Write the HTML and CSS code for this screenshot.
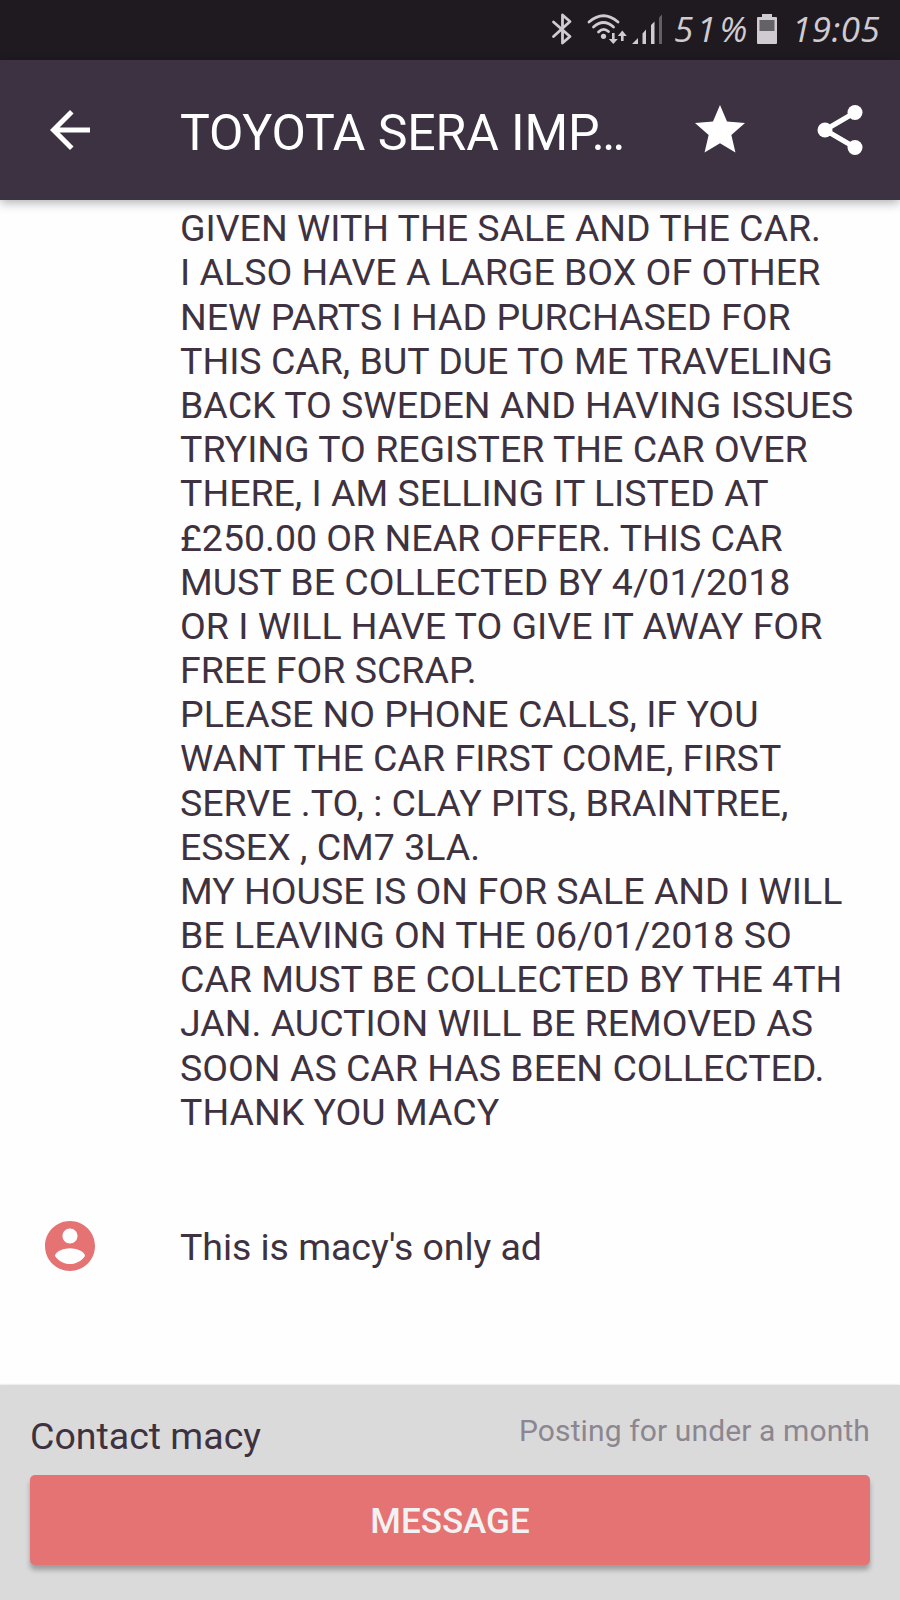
FILE: index.html
```
<!DOCTYPE html>
<html lang="en">
<head>
  <meta charset="UTF-8" />
  <meta name="viewport" content="width=device-width, initial-scale=1.0"/>
  <title>TOYOTA SERA IMPORT</title>
  <link rel="stylesheet" href="styles.css">
</head>
<body>
  <div class="status-bar">
    <!-- bluetooth, wifi and signal -->
    <svg class="status-icons" width="114" height="60" viewBox="0 0 114 60">
      <g fill="none" stroke="#cfcbd0" stroke-width="2.8" stroke-linejoin="round" stroke-linecap="round">
        <path d="M3.500 22 L20 36.500 L12.500 43 V15 L20 21.500 L3.500 36.500"/>
        <path d="M39 22 Q53.500 9.500 68 22"/>
        <path d="M43.500 27 Q53.500 18 63.500 27"/>
        <path d="M48.500 32 Q53.500 27 58.500 31.500"/>
      </g>
      <circle cx="53.500" cy="36.300" r="2.600" fill="#cfcbd0"/>
      <path fill="#cfcbd0" d="M62 33h2.600v6h3.200l-4.500 5-4.500-5H62zM71 41V36h-3.200l4.500-5.500 4.500 5.500h-3.200v5z"/>
      <path fill="#cfcbd0" d="M82 44l6-6v6zM92.500 44V33.500l3.500-4V44zM101 44V25l3.500-3.500V44z"/>
      <path fill="#625e65" d="M109 44V17.500l3-3V44z"/>
    </svg>
    <span class="battery-level">51%</span>
    <svg class="battery" width="22" height="60" viewBox="0 0 22 60">
      <path fill="#cfcbd0" d="M6 14h10v3h4q1 0 1 1v25q0 1-1 1H2q-1 0-1-1V18q0-1 1-1h4z"/>
      <path fill="#656267" d="M3.500 20h15v11h-15z"/>
    </svg>
    <span class="clock">19:05</span>
  </div>

  <header class="app-bar">
    <svg class="icon" viewBox="0 0 24 24"><path d="M20 11H7.830l5.590-5.590L12 4l-8 8 8 8 1.410-1.410L7.830 13H20v-2z"/></svg>
    <h1 class="title">TOYOTA SERA IMP…</h1>
    <svg class="icon" viewBox="0 0 24 24"><path d="M12 17.270L18.180 21l-1.640-7.030L22 9.240l-7.190-.61L12 2 9.190 8.630 2 9.240l5.460 4.730L5.820 21z"/></svg>
    <svg class="icon share" viewBox="0 0 24 24"><path d="M18 5L6 12l12 7" fill="none" stroke="#fff" stroke-width="2"/><circle cx="18" cy="5" r="3"/><circle cx="6" cy="12" r="3"/><circle cx="18" cy="19" r="3"/></svg>
  </header>

  <main class="content">
    <p class="description">GIVEN WITH THE SALE AND THE CAR.<br>
      I ALSO HAVE A LARGE BOX OF OTHER<br>
      NEW PARTS I HAD PURCHASED FOR<br>
      THIS CAR, BUT DUE TO ME TRAVELING<br>
      BACK TO SWEDEN AND HAVING ISSUES<br>
      TRYING TO REGISTER THE CAR OVER<br>
      THERE, I AM SELLING IT LISTED AT<br>
      £250.00 OR NEAR OFFER. THIS CAR<br>
      MUST BE COLLECTED BY 4/01/2018<br>
      OR I WILL HAVE TO GIVE IT AWAY FOR<br>
      FREE FOR SCRAP.<br>
      PLEASE NO PHONE CALLS, IF YOU<br>
      WANT THE CAR FIRST COME, FIRST<br>
      SERVE .TO, : CLAY PITS, BRAINTREE,<br>
      ESSEX , CM7 3LA.<br>
      MY HOUSE IS ON FOR SALE AND I WILL<br>
      BE LEAVING ON THE 06/01/2018 SO<br>
      CAR MUST BE COLLECTED BY THE 4TH<br>
      JAN. AUCTION WILL BE REMOVED AS<br>
      SOON AS CAR HAS BEEN COLLECTED.<br>
      THANK YOU MACY</p>

    <div class="seller">
      <svg class="icon avatar" viewBox="0 0 24 24"><path d="M12 2C6.480 2 2 6.480 2 12s4.480 10 10 10 10-4.480 10-10S17.520 2 12 2zm0 3c1.660 0 3 1.340 3 3s-1.340 3-3 3-3-1.340-3-3 1.340-3 3-3zm0 14.200c-2.500 0-4.710-1.280-6-3.220.03-1.990 4-3.080 6-3.080 1.990 0 5.970 1.090 6 3.080-1.290 1.940-3.500 3.220-6 3.220z"/></svg>
      <span class="seller-name">This is macy's only ad</span>
    </div>
  </main>

  <footer class="contact">
    <div class="contact-row">
      <span>Contact macy</span>
      <span class="posting">Posting for under a month</span>
    </div>
    <button class="message">MESSAGE</button>
  </footer>
</body>
</html>
```
FILE: styles.css
```
body {
  margin: 0;
  height: 1600px;
  display: flex;
  flex-direction: column;
  overflow: hidden;
  background-color: #fefefe;
  color: #3e3241;
  font-family: Roboto, sans-serif;
  font-size: 37.5px;
  line-height: 44.17px;
}
.status-bar {
  height: 60px;
  flex: none;
  display: flex;
  align-items: center;
  justify-content: flex-end;
  padding-right: 20px;
  background-color: #1f1a20;
  color: #cfcbd0;
  font-family: "Open Sans", sans-serif;
  font-style: italic;
  font-size: 35px;
  line-height: 58px;
}
.status-bar span {
  height: 60px;
}
.battery-level {
  width: 76px;
  margin-left: 10px;
  margin-right: 6px;
  letter-spacing: 3.5px;
  white-space: nowrap;
}
.clock {
  width: 88px;
  margin-left: 14px;
  letter-spacing: 0.5px;
}
.app-bar {
  height: 140px;
  flex: none;
  box-sizing: border-box;
  display: flex;
  align-items: center;
  padding: 0 30px 0 40px;
  background-color: #3d3242;
  box-shadow: 0 3px 10px rgba(0, 0, 0, 0.3);
}
.icon {
  width: 60px;
  height: 60px;
  flex: none;
  fill: #fff;
}
.title {
  flex: 1;
  margin: 0 0 0 80px;
  padding-top: 5px;
  color: #fff;
  font-size: 50px;
  font-weight: normal;
  line-height: 60px;
  letter-spacing: -0.12px;
  white-space: nowrap;
}
.share {
  margin-left: 60px;
}
.content {
  flex: 1;
  padding-top: 6.3px;
}
.description {
  margin: 0 0 82px 180px;
  white-space: nowrap;
}
.seller {
  display: flex;
  align-items: center;
  gap: 80px;
  padding-left: 40px;
}
.seller-name {
  padding-top: 2px;
  letter-spacing: -0.05px;
}
.avatar {
  fill: #e57373;
}
.contact {
  height: 215px;
  flex: none;
  box-sizing: border-box;
  padding: 29px 30px 0;
  background-color: #dadada;
  box-shadow: 0 0 2px rgba(0, 0, 0, 0.2);
}
.contact-row {
  height: 44px;
  display: flex;
  justify-content: space-between;
  align-items: flex-start;
}
.posting {
  color: #8c8690;
  font-size: 30px;
  line-height: 34px;
  letter-spacing: 0.12px;
}
.message {
  width: 100%;
  height: 90px;
  margin-top: 17px;
  padding: 2px 0 0;
  border: none;
  border-radius: 5px;
  background-color: #e57373;
  box-shadow: 0 5px 5px rgba(0, 0, 0, 0.28);
  color: #f2f2f2;
  font-family: inherit;
  font-size: 35px;
  font-weight: 500;
  cursor: pointer;
}
```
